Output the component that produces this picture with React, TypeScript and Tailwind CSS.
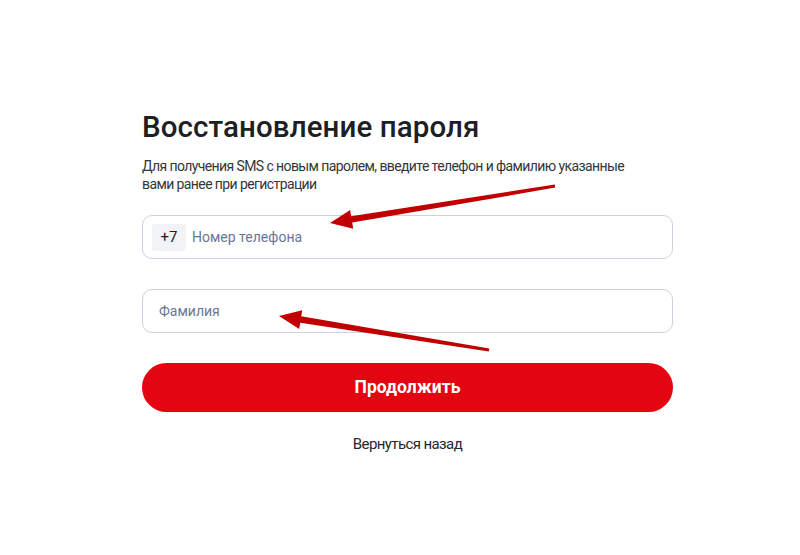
import React from "react";

function arrowPoints(tx: number, ty: number, hx: number, hy: number) {
  const dx = hx - tx;
  const dy = hy - ty;
  const len = Math.hypot(dx, dy);
  const ux = dx / len;
  const uy = dy / len;
  const px = -uy;
  const py = ux;
  const headLen = 22;
  const headW = 9.5;
  const shaftEnd = 3.2;
  const shaftStart = 1.6;
  const bx = hx - ux * headLen;
  const by = hy - uy * headLen;
  const pts: [number, number][] = [
    [tx + px * shaftStart, ty + py * shaftStart],
    [bx + px * shaftEnd, by + py * shaftEnd],
    [bx + px * headW, by + py * headW],
    [hx, hy],
    [bx - px * headW, by - py * headW],
    [bx - px * shaftEnd, by - py * shaftEnd],
    [tx - px * shaftStart, ty - py * shaftStart],
  ];
  return pts.map((p) => p.join(",")).join(" ");
}

export default function App() {
  return (
    <div
      className="relative w-[800px] h-[555px] bg-white overflow-hidden"
      style={{ fontFamily: "Roboto, 'Liberation Sans', sans-serif" }}
    >
      <div className="pl-[142px] pt-[110px] w-[673px]">
        <h1 className="text-[29.5px] leading-[34px] font-medium text-[#1d2023] tracking-[0.1px]">
          Восстановление пароля
        </h1>
        <p className="mt-[13px] text-[14px] leading-[18px] text-[#33363b] tracking-[-0.6px] w-[500px]">
          Для получения SMS с новым паролем, введите телефон и фамилию указанные вами ранее при регистрации
        </p>
        <div className="mt-[22px] flex flex-col w-[531px]">
          <div className="h-[44px] border border-[#cdd2e2] rounded-[10px] flex items-center pl-[9px]">
            <div className="h-[27px] w-[34px] bg-[#f2f3f7] rounded-[3px] flex items-center justify-center text-[15px] text-[#1d2023]">
              +7
            </div>
            <span className="ml-[6px] text-[14px] text-[#6e7591]">Номер телефона</span>
          </div>
          <div className="mt-[30px] h-[44px] border border-[#cdd2e2] rounded-[10px] flex items-center pl-[16px]">
            <span className="text-[14px] text-[#6e7591]">Фамилия</span>
          </div>
          <button className="mt-[30px] h-[49px] rounded-full bg-[#e30611] text-white text-[17.5px] font-bold flex items-center justify-center">
            Продолжить
          </button>
          <div className="mt-[22px] text-center text-[15px] leading-[20px] tracking-[-0.6px] text-[#26292d]">
            Вернуться назад
          </div>
        </div>
      </div>
      <svg className="absolute inset-0 pointer-events-none" width="800" height="555">
        <polygon points={arrowPoints(555, 186, 330, 223)} fill="#c00000" />
        <polygon points={arrowPoints(489, 350, 279, 316)} fill="#c00000" />
      </svg>
    </div>
  );
}
